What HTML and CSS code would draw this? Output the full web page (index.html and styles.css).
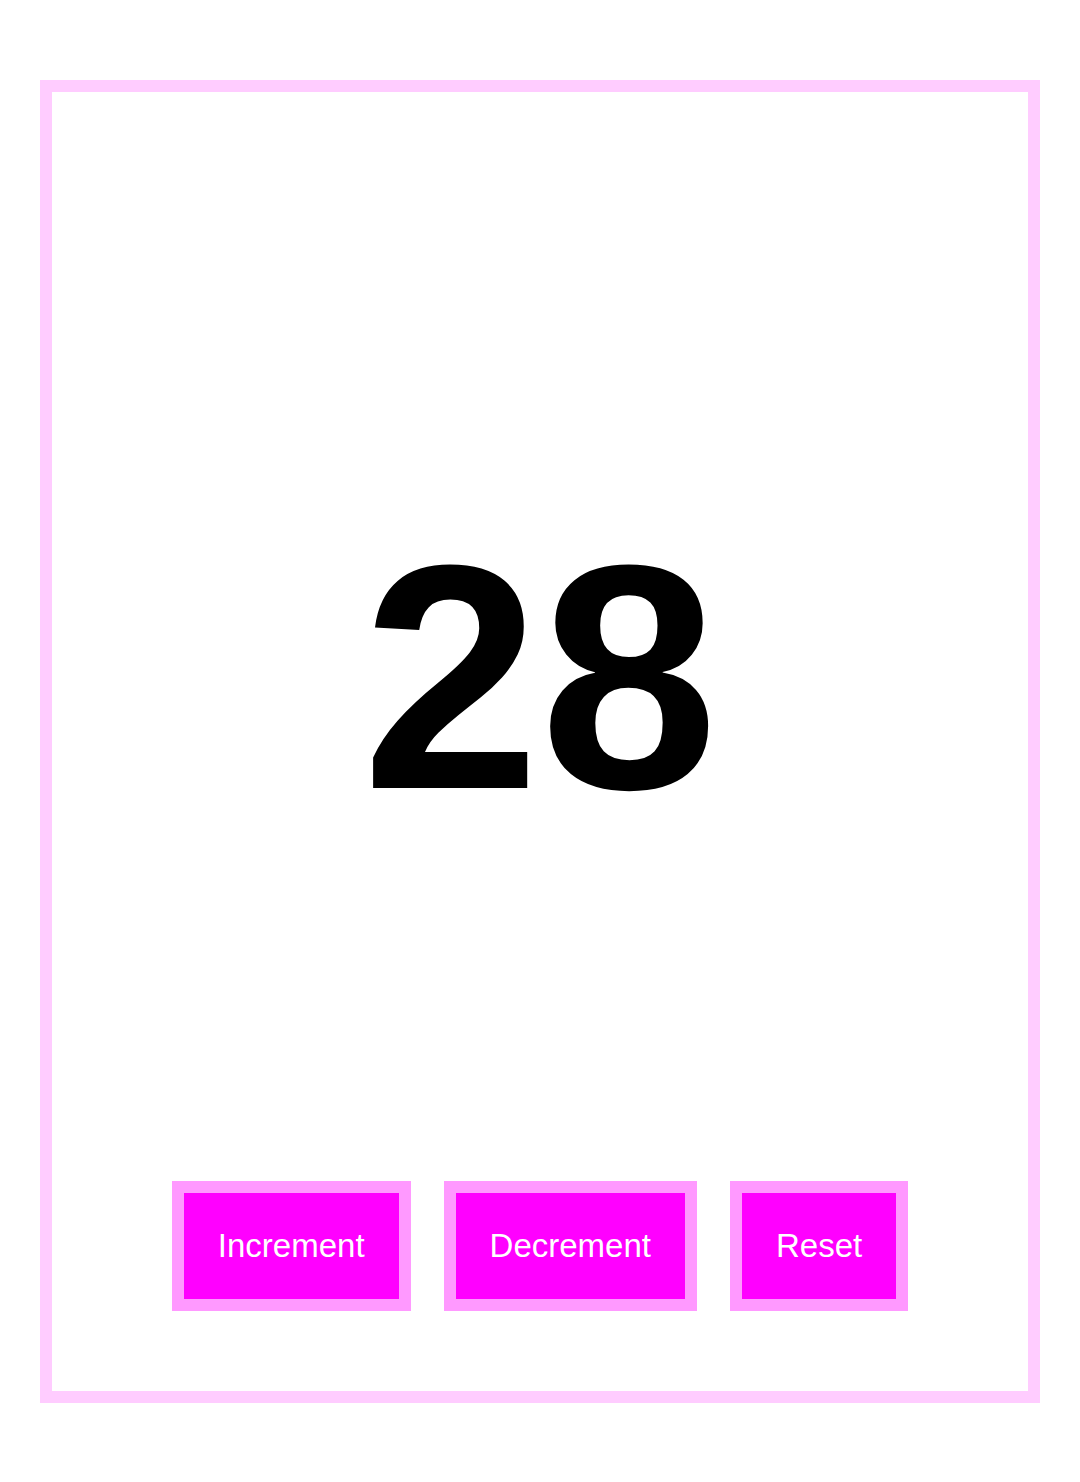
FILE: index.html
```html
<!DOCTYPE html>
<html lang="en">
<head>
<meta charset="utf-8">
<meta name="viewport" content="width=device-width, initial-scale=1">
<title>Counter</title>
<link rel="stylesheet" href="styles.css">
</head>
<body>
<main class="counter">
  <h1 class="count">28</h1>
  <div class="actions">
    <button class="button" type="button">Increment</button>
    <button class="button" type="button">Decrement</button>
    <button class="button" type="button">Reset</button>
  </div>
</main>
</body>
</html>
```
FILE: styles.css
```css
* {
  box-sizing: border-box;
}

body {
  margin: 0;
  background: #fff;
  color: #000;
  font-family: Arial, "Liberation Sans", sans-serif;
}

.counter {
  margin: 80px 40px 79px;
  min-height: calc(100vh - 159px);
  padding: 80px;
  border: 12px solid #fcf;
  display: flex;
  flex-direction: column;
}

.count {
  flex: 1;
  display: flex;
  align-items: center;
  justify-content: center;
  margin: 0;
  font-size: 320px;
  line-height: 1;
  font-weight: bold;
}

.actions {
  display: flex;
  flex-wrap: wrap;
  justify-content: center;
  gap: 33px;
}

.button {
  padding: 33px 34px;
  border: 12px solid #f9f;
  border-radius: 0;
  background: #f0f;
  color: #fff;
  font-family: inherit;
  font-size: 33px;
  line-height: 40px;
  cursor: pointer;
}
```
